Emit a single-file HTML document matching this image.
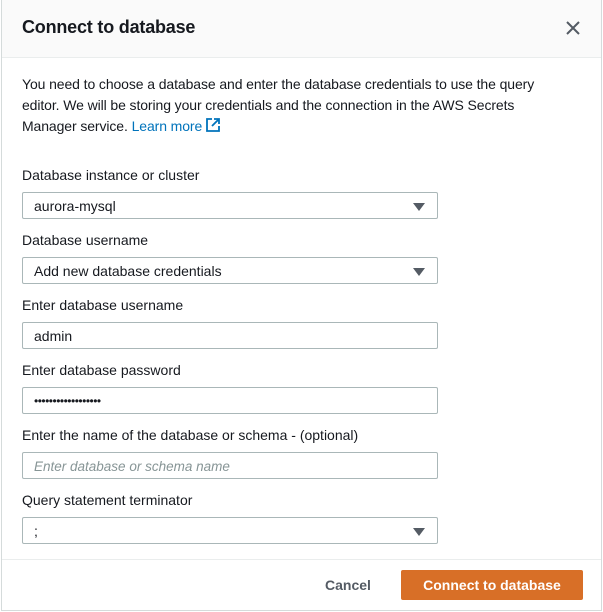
<!DOCTYPE html>
<html><head><style>
*{box-sizing:border-box;margin:0;padding:0}
body{width:603px;height:612px;background:#fff;font-family:"Liberation Sans",sans-serif;color:#16191f;position:relative;overflow:hidden}
.modal{position:absolute;left:1px;top:0;width:601px;height:611px;border:1px solid #d5dbdb;border-top:none;background:#fff}
.hdr{position:absolute;left:0;top:0;width:100%;height:58px;background:#fafafa;border-bottom:1px solid #eaeded}
.hdr h1{position:absolute;left:20px;top:17px;font-size:18px;font-weight:bold;letter-spacing:-0.2px}
.x{position:absolute;left:563px;top:20px}
.desc{position:absolute;left:20px;top:74px;width:535px;font-size:14px;line-height:21px;letter-spacing:-0.1px}
.desc a{color:#0073bb;text-decoration:none}
.lbl{position:absolute;left:20px;font-size:14px}
.fld{position:absolute;left:20px;width:416px;height:27px;border:1px solid #aab7b8;border-radius:2px;font-size:14px;padding:5px 0 0 11px}
.fld.sel:after{content:"";position:absolute;right:12px;top:10px;border-left:6px solid transparent;border-right:6px solid transparent;border-top:8px solid #545b64}
.ph{color:#879596;font-style:italic;font-size:13.5px}
.ftr{position:absolute;left:0;top:559px;width:100%;border-top:1px solid #eaeded}
.cancel{position:absolute;left:323px;top:577px;font-size:14px;font-weight:bold;color:#545b64}
.btn{position:absolute;left:399px;top:570px;width:182px;height:30px;background:#d86f27;color:#fff;font-size:14px;font-weight:bold;text-align:center;line-height:30px;border-radius:2px}
</style></head><body>
<div class="modal">
<div class="hdr"><h1>Connect to database</h1>
<svg class="x" width="16" height="16" viewBox="0 0 16 16"><path d="M2 2L14 14M14 2L2 14" stroke="#545b64" stroke-width="2"/></svg></div>
<div class="desc">You need to choose a database and enter the database credentials to use the query editor. We will be storing your credentials and the connection in the AWS Secrets Manager service. <a>Learn more <svg width="14" height="14" viewBox="0 0 14 14" style="vertical-align:-1px"><path d="M6 1H1V13H13V8M8 1H13V6M13 1L6 8" stroke="#0073bb" stroke-width="1.8" fill="none"/></svg></a></div>
<div class="lbl" style="top:167px">Database instance or cluster</div>
<div class="fld sel" style="top:192px">aurora-mysql</div>
<div class="lbl" style="top:232px">Database username</div>
<div class="fld sel" style="top:257px">Add new database credentials</div>
<div class="lbl" style="top:297px">Enter database username</div>
<div class="fld" style="top:322px">admin</div>
<div class="lbl" style="top:362px">Enter database password</div>
<div class="fld" style="top:387px;font-size:12px;padding-top:6px;letter-spacing:-0.5px">••••••••••••••••••</div>
<div class="lbl" style="top:427px">Enter the name of the database or schema - (optional)</div>
<div class="fld" style="top:452px"><span class="ph">Enter database or schema name</span></div>
<div class="lbl" style="top:492px">Query statement terminator</div>
<div class="fld sel" style="top:517px">;</div>
<div class="ftr"></div>
<div class="cancel">Cancel</div>
<div class="btn">Connect to database</div>
</div>
</body></html>
